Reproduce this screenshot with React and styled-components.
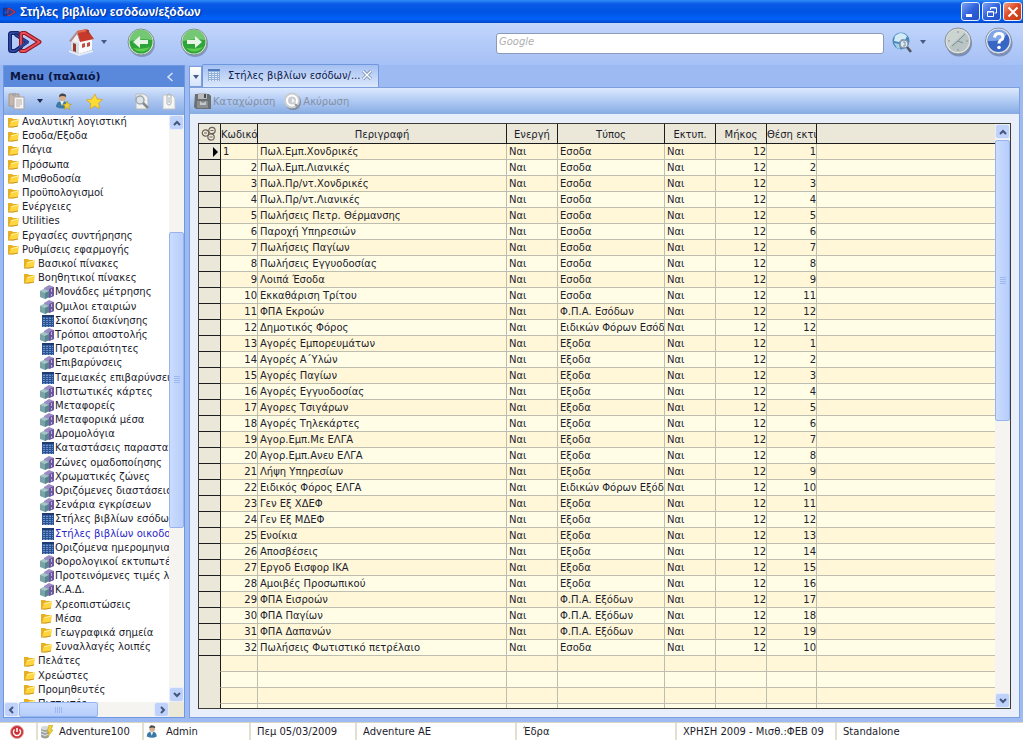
import React, { useState } from "react";
import styled, { createGlobalStyle } from "styled-components";

const GlobalStyle = createGlobalStyle`
  * {
    box-sizing: border-box;
  }
  body {
    margin: 0;
    overflow: hidden;
    font-family: "DejaVu Sans", Verdana, sans-serif;
    font-size: 10px;
    color: #1c1c2c;
  }
  button,
  input {
    font-family: inherit;
    font-size: inherit;
  }
`;

const Window = styled.div`
  height: 100vh;
  display: flex;
  flex-direction: column;
  background: #9dbaf3;
`;

const TitleBar = styled.header`
  height: 23px;
  flex: none;
  display: flex;
  align-items: center;
  gap: 4px;
  padding: 0 1px 0 3px;
  background: linear-gradient(#2f8bf8 0, #0a5ae6 4px, #0054e3 12px, #0162fb 19px, #0146c4 23px);
`;

const Title = styled.h1`
  flex: 1;
  margin: 0;
  font-family: "Liberation Sans", Arial, sans-serif;
  font-size: 12px;
  font-weight: 700;
  line-height: 16px;
  color: #fff;
  text-shadow: 1px 1px 1px #0a2f8c;
`;

const WindowButtons = styled.div`
  display: flex;
  gap: 2px;
`;

const WindowButton = styled.button`
  width: 19px;
  height: 19px;
  padding: 0;
  display: flex;
  align-items: center;
  justify-content: center;
  border: 1px solid #e8eefc;
  border-radius: 3px;
  background: ${(props) =>
    props.$close
      ? "linear-gradient(135deg, #f0a186, #de4a26 45%, #c03a14)"
      : "linear-gradient(135deg, #7da2f4, #2f62dc 50%, #2450c4)"};
`;

const TopBar = styled.div`
  height: 42px;
  flex: none;
  display: flex;
  align-items: center;
  padding: 0 10px 4px 8px;
  background: linear-gradient(#c2d6fc, #a5c0f5);
`;

const TopButton = styled.button`
  display: flex;
  align-items: center;
  gap: 5px;
  padding: 0;
  border: none;
  background: none;
  margin-right: ${(props) => props.$after || 0}px;
`;

const SearchBox = styled.input`
  width: 388px;
  height: 21px;
  margin: 2px 8px 0 auto;
  padding: 0 2px 4px;
  border: 1px solid #8a9ab8;
  border-radius: 3px;
  background: #fff;
  &::placeholder {
    color: #b0b0b0;
    font-style: italic;
    opacity: 1;
  }
`;

const Main = styled.div`
  flex: 1;
  min-height: 0;
  display: flex;
  gap: 4px;
  padding: 0 3px 4px;
  background: #9dbaf3;
`;

const Sidebar = styled.aside`
  width: 182px;
  flex: none;
  display: flex;
  flex-direction: column;
  border: 1px solid #6d98e2;
  background: #fff;
`;

const SidebarHead = styled.div`
  height: 21px;
  flex: none;
  display: flex;
  align-items: center;
  justify-content: space-between;
  padding: 0 10px 0 6px;
  background: #5a88da;
`;

const SidebarTitle = styled.h2`
  margin: 0;
  font-size: 11px;
  line-height: 16px;
  color: #0b1640;
`;

const CollapseButton = styled.button`
  padding: 0;
  border: none;
  background: none;
  display: flex;
`;

const SidebarTools = styled.div`
  height: 28px;
  flex: none;
  display: flex;
  align-items: center;
  padding: 0 6px 0 4px;
  background: linear-gradient(#d5e5fc, #a9c4f0 50%, #86abe6);
`;

const TreeArea = styled.div`
  flex: 1;
  min-height: 0;
  display: flex;
`;

const TreeClip = styled.nav`
  flex: 1;
  min-width: 0;
  overflow: hidden;
`;

// rows share the height, the last one is cut by the scroll area
const TreeList = styled.ul`
  height: calc(100% + 9px);
  margin: 0;
  padding: 0;
  list-style: none;
  display: grid;
  grid-auto-rows: 1fr;
`;

const TreeItem = styled.li`
  min-height: 0;
  padding-left: ${(props) => 3 + props.$level * 17}px;
  display: flex;
`;

const TreeLink = styled.a`
  display: flex;
  align-items: center;
  gap: 1px;
  line-height: 14px;
  white-space: nowrap;
  text-decoration: none;
  color: ${(props) => (props.$active ? "#2a1fc8" : "#1c1c2c")};
`;

const IconSlot = styled.span`
  width: 14px;
  flex: none;
  display: flex;
  justify-content: flex-end;
  margin-left: ${(props) => (props.$deep ? -1 : 0)}px;
`;

const Scroll = styled.div`
  flex: none;
  display: flex;
  flex-direction: ${(props) => (props.$horizontal ? "row" : "column")};
  ${(props) => (props.$horizontal ? "height: 15px;" : "width: 15px;")}
  background: #f5f4f0;
`;

const ScrollButton = styled.button`
  width: 15px;
  height: 15px;
  flex: none;
  padding: 0;
  display: flex;
  align-items: center;
  justify-content: center;
  border: 1px solid #e6eefc;
  border-radius: 3px;
  background: #c0d2fa;
`;

const ScrollGap = styled.div`
  flex: ${(props) => props.$share};
`;

const ScrollThumb = styled.div`
  flex: ${(props) => props.$share};
  display: flex;
  align-items: center;
  justify-content: center;
  border: 1px solid #98b4ee;
  border-radius: 2px;
  background: ${(props) =>
    props.$horizontal
      ? "linear-gradient(#cbdcfe, #b6cdfb)"
      : "linear-gradient(90deg, #cbdcfe, #b6cdfb)"};
`;

const Corner = styled.div`
  width: 15px;
  background: #ece9d8;
`;

const BottomScroll = styled.div`
  display: flex;
  > :first-child {
    flex: 1;
  }
`;

const Content = styled.main`
  flex: 1;
  min-width: 0;
  display: flex;
  flex-direction: column;
`;

const TabStrip = styled.div`
  height: 22px;
  flex: none;
  display: flex;
  align-items: flex-end;
`;

const TabMenu = styled.button`
  width: 13px;
  height: 21px;
  padding: 0;
  display: flex;
  align-items: center;
  justify-content: center;
  border: 1px solid #7d9cd8;
  background: linear-gradient(#fff, #d4e2fa);
`;

const Tab = styled.div`
  height: 23px;
  display: flex;
  align-items: center;
  gap: 2px;
  padding: 0 6px 2px 5px;
  border: 1px solid #6f97de;
  border-bottom: none;
  border-radius: 2px 2px 0 0;
  background: linear-gradient(#a4c0f2, #dce8fc);
`;

const TabLabel = styled.button`
  display: flex;
  align-items: center;
  gap: 8px;
  padding: 0;
  border: none;
  background: none;
  white-space: nowrap;
  color: #10204c;
`;

const TabClose = styled.button`
  display: flex;
  padding: 0;
  border: none;
  background: none;
`;

const Panel = styled.section`
  flex: 1;
  min-height: 0;
  display: flex;
  flex-direction: column;
  border: 1px solid #7d9fdd;
  background: #e8eefa;
`;

const PanelTools = styled.div`
  height: 26px;
  flex: none;
  display: flex;
  align-items: center;
  gap: 9px;
  padding: 0 4px;
  background: linear-gradient(#dce9fd, #b0caf3 50%, #86abe3);
`;

const PanelButton = styled.button`
  display: flex;
  align-items: center;
  gap: 2px;
  padding: 0;
  border: none;
  background: none;
  color: #8490a4;
`;

const GridFrame = styled.div`
  flex: 1;
  min-height: 0;
  margin: 9px 8px 8px;
  display: flex;
  border: 1px solid #3c3c34;
  background: #fff;
`;

const GridClip = styled.div`
  flex: 1;
  min-width: 0;
  overflow: hidden;
`;

const Table = styled.table`
  width: 100%;
  table-layout: fixed;
  border-collapse: separate;
  border-spacing: 0;
`;

const Col = styled.col`
  width: ${(props) => (props.$width ? `${props.$width}px` : "auto")};
`;

const HeadCell = styled.th`
  height: 20px;
  padding: ${(props) => (props.$icon ? "0 2px" : "3px 0 0")};
  overflow: hidden;
  white-space: nowrap;
  font-weight: 400;
  line-height: 16px;
  text-align: ${(props) => (props.$left ? "left" : "center")};
  border-right: 1px solid #1c1c1c;
  border-bottom: 1px solid #1c1c1c;
  background: #ebe8d9;
  &:last-child {
    border-right: none;
  }
  svg {
    display: block;
  }
`;

const Row = styled.tr`
  background: #fff7d8;
  &:nth-child(even) {
    background: #fffde6;
  }
`;

const Cell = styled.td`
  height: 16px;
  padding: 0 ${(props) => (props.$right ? 0 : 2)}px;
  overflow: hidden;
  white-space: nowrap;
  line-height: 15px;
  text-align: ${(props) => (props.$right ? "right" : "left")};
  border-right: 1px solid #bdbdb0;
  border-bottom: 1px solid #bdbdb0;
  &:last-child {
    border-right: none;
  }
`;

const RowMark = styled.td`
  height: 16px;
  padding: 0;
  line-height: 0;
  text-align: right;
  border-right: 1px solid #1c1c1c;
  border-bottom: 1px solid ${(props) => (props.$empty ? "#ebe8d9" : "#1c1c1c")};
  background: #ebe8d9;
`;

const StatusBar = styled.footer`
  height: 18px;
  flex: none;
  display: grid;
  grid-template-columns: 38fr 106fr 107fr 106fr 160fr 160fr 160fr 186fr;
  border-top: 1px solid #d8d4c4;
  background: #fff;
`;

const StatusItem = styled.div`
  min-width: 0;
  display: flex;
  align-items: center;
  gap: 6px;
  padding-left: ${(props) => (props.$icon ? 2 : 6)}px;
  white-space: nowrap;
  border-right: 2px solid #e2dfd0;
  &:first-child {
    padding-left: 10px;
  }
  &:last-child {
    border-right: none;
  }
`;

const Logo = ({ width, height }) => (
  <svg width={width} height={height} viewBox="0 0 34 24" fill="none" strokeLinejoin="round" strokeLinecap="round">
    <path d="M10 3H3.500Q2 3 2 4.500v15Q2 21 3.500 21H7l6-4" stroke="#14246a" strokeWidth="4" />
    <path d="M10 3H3.500Q2 3 2 4.500v15Q2 21 3.500 21H7l6-4" stroke="#3350a8" strokeWidth="1.500" />
    <path d="M8 5l11 7-7 5" stroke="#14246a" strokeWidth="3.500" />
    <path d="M8 5l11 7-7 5" stroke="#3350a8" strokeWidth="1.200" />
    <path d="M13 16V4.500Q13 3 14.500 3H17l14.500 9L17 21h-4" stroke="#931824" strokeWidth="4" />
    <path d="M13 16V4.500Q13 3 14.500 3H17l14.500 9L17 21h-4" stroke="#e8505a" strokeWidth="1.800" />
    <path d="M16 10l4 2-8 5" stroke="#2a429c" strokeWidth="2.500" />
  </svg>
);

const HouseIcon = () => (
  <svg width="28" height="28" viewBox="0 0 28 28">
    <path d="M2 22l10 5 14-5-10-4z" fill="#63769c" opacity=".5" />
    <path d="M3 12l8 2v12l-8-4z" fill="#d9dde4" />
    <path d="M11 13l13-2v11l-13 4z" fill="#f8f9fb" />
    <path d="M3 13l6-9 2 9v2z" fill="#eef0f4" />
    <path d="M9 3l10-2 7 10-14 3z" fill="#c7392a" />
    <path d="M9 3l10-2 1 2-10 2z" fill="#e26a50" />
    <path d="M9 3L1 13l2 1 6-8 3 8z" fill="#b08a86" />
    <path d="M18 2h3v4h-2z" fill="#a83a2c" />
    <path d="M5 15l3 1v8l-3-1z" fill="#9b3b28" />
    <path d="M14 16l3-1v4l-3 1zM19 15l3-1v4l-3 1z" fill="#bc4c3c" />
    <path d="M1 22l10 4 14-4v2l-14 4-10-4z" fill="#e9edf4" />
  </svg>
);

const Arrow = ({ flip }) => (
  <svg width="29" height="29" viewBox="0 0 29 29">
    <circle cx="15" cy="16" r="13" fill="#5c7196" opacity=".55" />
    <circle cx="14" cy="14" r="13" fill="#e4eae4" stroke="#7f8f8f" strokeWidth="1" />
    <circle cx="14" cy="14" r="11.500" fill="#2fa43a" />
    <path d="M3 13a11 11 0 0 1 22-1q-10-2-22 1z" fill="#74c874" />
    <path d="M6 20a11 11 0 0 0 17-1q-8 3-17 1z" fill="#5ed04e" />
    <path
      d={flip ? "M22 14l-7-6v4H7v4h8v4z" : "M6 14l7-6v4h8v4h-8v4z"}
      fill="#e6f5e4"
    />
  </svg>
);

const Caret = ({ color = "#465a84" }) => (
  <svg width="6" height="4" viewBox="0 0 6 4">
    <path d="M0 0h6L3 4z" fill={color} />
  </svg>
);

const GlobeIcon = () => (
  <svg width="20" height="21" viewBox="0 0 20 21">
    <circle cx="9" cy="9" r="8.500" fill="#4b88bd" />
    <path d="M3 4q6-6 12 0l-2 4-3-1-3 3-5-1z" fill="#d3ebf5" />
    <path d="M2 11l5 1 1 5-3-1z" fill="#a5d3e4" />
    <circle cx="12" cy="12" r="4" fill="#dcebf3" stroke="#8796aa" strokeWidth="1.500" />
    <path d="M15 15l4 5" stroke="#54565c" strokeWidth="2.500" />
    <path d="M11 10h2v4h-2" stroke="#7b8ea8" fill="none" />
  </svg>
);

const ClockIcon = () => (
  <svg width="29" height="30" viewBox="0 0 29 30">
    <circle cx="15" cy="16.500" r="13" fill="#566a90" opacity=".6" />
    <circle cx="14" cy="14" r="13" fill="#dfe2e2" stroke="#858d92" />
    <circle cx="14" cy="14" r="11" fill="#b9c4c4" />
    <path d="M5 20A11 11 0 0 1 21 5z" fill="#ccd4d2" />
    <path d="M14 14l7-7M14 14l5 2M14 14l-6 5" stroke="#7b8f94" strokeWidth="1" />
    <path d="M14 4v2M14 22v2M4 14h2M22 14h2" stroke="#8a9496" />
  </svg>
);

const HelpIcon = () => (
  <svg width="28" height="30" viewBox="0 0 28 30">
    <circle cx="14.500" cy="16.500" r="13" fill="#566a90" opacity=".6" />
    <circle cx="13.500" cy="14" r="13" fill="#dfe4ec" stroke="#8390a8" />
    <circle cx="13.500" cy="14" r="11" fill="#3866c4" />
    <path d="M3 14A10.500 10.500 0 0 1 22 7q-5 8-19 7z" fill="#7fa6e8" />
    <path d="M9.500 10.500q.500-4 4.500-4t4 3.500q0 2-2 3t-2 3.500" fill="none" stroke="#fff" strokeWidth="3" />
    <circle cx="14" cy="20.500" r="1.800" fill="#fff" />
  </svg>
);

const Chevron = ({ dir, color = "#40587e" }) => {
  const paths = {
    up: "M1 6l3-3 3 3",
    down: "M1 2l3 3 3-3",
    left: "M5 1L2 4l3 3",
    right: "M3 1l3 3-3 3",
  };
  return (
    <svg width="8" height="8" viewBox="0 0 8 8">
      <path d={paths[dir]} fill="none" stroke={color} strokeWidth="2" />
    </svg>
  );
};

const Grip = ({ horizontal }) => (
  <svg width="8" height="8" viewBox="0 0 8 8">
    <path
      d={horizontal ? "M.5 1v6M2.500 1v6M4.500 1v6M6.500 1v6" : "M1 .5h6M1 2.500h6M1 4.500h6M1 6.500h6"}
      stroke="#9db8f0"
    />
  </svg>
);

const PasteIcon = () => (
  <svg width="18" height="18" viewBox="0 0 18 18">
    <path d="M1 2h10v12H1z" fill="#c8b4a8" stroke="#a09890" />
    <path d="M4 1h4v3H4z" fill="#a4a6aa" />
    <path d="M6 5h10v12H6z" fill="#f4f4f4" stroke="#a8a4a2" />
    <path d="M8 8h6M8 10h6M8 12h6M8 14h4" stroke="#c0b0aa" />
  </svg>
);

const UserIcon = ({ star, size = 17 }) => (
  <svg width={size} height={size} viewBox="0 0 17 17">
    <path d="M1 14q0-6 6-6t6 6q-5 3-12 0z" fill="#3a7aa4" />
    <path d="M5 8l2 5 2-5z" fill="#e3eef5" />
    <circle cx="7.500" cy="4.500" r="3.500" fill="#d8b08e" />
    <path d="M4 4q0-4 4-3.500T11 4Q8 2 4 4z" fill="#474747" />
    {star && <path d="M12 8l1.300 3 3.200.3-2.500 2 .8 3.200-2.800-1.700-2.800 1.700.8-3.200-2.500-2 3.200-.3z" fill="#f2cf33" stroke="#ad8c1c" strokeWidth=".5" />}
  </svg>
);

const StarIcon = () => (
  <svg width="17" height="17" viewBox="0 0 17 17">
    <path d="M9 1l2 5 5.500.5-4 3.500 1 5.500L8.500 13 4 16l1-5.500L.5 7 6 6z" fill="#ffdc32" stroke="#d0a82c" strokeWidth=".8" />
  </svg>
);

const FindIcon = () => (
  <svg width="16" height="17" viewBox="0 0 16 17">
    <path d="M2 1h8l4 3v12H2z" fill="#f0f1f1" stroke="#b5b8ba" />
    <circle cx="6" cy="7" r="4" fill="#dce4e8" stroke="#a0a8ac" strokeWidth="1.500" />
    <path d="M9 10l5 5" stroke="#84898c" strokeWidth="2.500" />
  </svg>
);

const ClipIcon = () => (
  <svg width="14" height="17" viewBox="0 0 14 17">
    <path d="M1 2h9l3 3v11H1z" fill="#f5f6f6" stroke="#c0c3c5" />
    <path d="M5 10V3q0-2 2-2t2 2v7q0 2-2 2t-2-2M7 4v6" fill="none" stroke="#b0b3b5" />
  </svg>
);

const FolderIcon = () => (
  <svg width="13" height="11" viewBox="0 0 13 11">
    <path d="M0 10V1h4l1 1h4v2z" fill="#e8ae24" />
    <path d="M1 10l2-6 8-2-1 7-5 1.500z" fill="#ffd640" />
    <path d="M3 4.800L10.500 3" stroke="#fff09a" />
    <path d="M0 10h5l5-1" stroke="#c8921c" fill="none" />
  </svg>
);

const CubeIcon = () => (
  <svg width="14" height="14" viewBox="0 0 14 14">
    <path d="M4 3l5-3 5 2v9l-5 2-5-3z" fill="#9c8cc4" />
    <path d="M9 4l5-2v9l-5 2z" fill="#6c589e" />
    <path d="M0 6l4-2 5 2v6l-4 2-5-2z" fill="#78a4a8" />
    <path d="M0 6l4-2 5 2-4 2z" fill="#a5c4c8" />
    <path d="M5 8l4-2v6l-4 2z" fill="#5a8490" />
    <path d="M11.500 4v3M11.500 9v2" stroke="#c0b0e4" />
  </svg>
);

const GridIcon = ({ size = 12, pale }) => (
  <svg width={size} height={size} viewBox="0 0 12 12">
    <path d="M0 0h12v12H0z" fill={pale ? "#e1eaf6" : "#6a92cc"} />
    <path d="M0 0h12v2.500H0z" fill={pale ? "#4d7bbd" : "#1e3c74"} />
    <path
      d="M0 4.500h12M0 6.500h12M0 8.500h12M0 10.500h12M.5 2v10M3.500 2v10M6.500 2v10M9.500 2v10M11.500 2v10"
      stroke={pale ? "#91b0d8" : "#2c5292"}
    />
  </svg>
);

const SaveIcon = () => (
  <svg width="17" height="18" viewBox="0 0 17 18">
    <path d="M1 2h14l2 2v13H2L0 15z" fill="#6c6f72" />
    <path d="M4 1h9v6H4z" fill="#b8bbbe" />
    <path d="M10 2h2v4h-2z" fill="#494c50" />
    <path d="M3 9h11v7H3z" fill="#8b8e91" />
    <path d="M6 9q3 4 6 0v4H6z" fill="#c5c8ca" />
  </svg>
);

const CancelIcon = () => (
  <svg width="17" height="18" viewBox="0 0 17 18">
    <circle cx="9" cy="10" r="8" fill="#7c8797" />
    <circle cx="8" cy="8.500" r="8" fill="#c9ccd0" />
    <circle cx="8" cy="8.500" r="5" fill="none" stroke="#fff" strokeWidth="2" />
    <path d="M8 6l3 3-3 2z" fill="#f4f4f4" />
    <path d="M11 12l4 4" stroke="#92979d" strokeWidth="2" />
  </svg>
);

const RingsIcon = () => (
  <svg width="16" height="16" viewBox="0 0 16 16" fill="none" stroke="#6c6258" strokeWidth="1.200">
    <circle cx="4.500" cy="7" r="3.200" />
    <circle cx="11" cy="4.500" r="3.200" />
    <circle cx="10" cy="11" r="3.200" />
    <path d="M3 7h3M9.500 4.500h3M8.500 11h3" />
  </svg>
);

const PowerIcon = () => (
  <svg width="14" height="14" viewBox="0 0 14 14">
    <circle cx="7" cy="7" r="6.500" fill="#cc3336" stroke="#e6a2a2" />
    <path d="M4.500 4.500a3.500 3.500 0 1 0 5 0M7 3v4" fill="none" stroke="#fff" strokeWidth="1.500" />
  </svg>
);

const DatabaseIcon = () => (
  <svg width="13" height="14" viewBox="0 0 13 14">
    <path d="M1 3q4-3 8 0v9q-4 3-8 0z" fill="#9ca2a2" />
    <ellipse cx="5" cy="3" rx="4" ry="2" fill="#d6dada" />
    <path d="M1 6q4 3 8 0M1 9q4 3 8 0" stroke="#e6e9e9" fill="none" />
    <path d="M9 0h4l-2 5h2l-6 8 2-6H7z" fill="#f0d038" stroke="#b09a26" strokeWidth=".5" />
  </svg>
);

const TREE = [
  [0, "folder", "Αναλυτική λογιστική"],
  [0, "folder", "Εσοδα/Εξοδα"],
  [0, "folder", "Πάγια"],
  [0, "folder", "Πρόσωπα"],
  [0, "folder", "Μισθοδοσία"],
  [0, "folder", "Προϋπολογισμοί"],
  [0, "folder", "Ενέργειες"],
  [0, "folder", "Utilities"],
  [0, "folder", "Εργασίες συντήρησης"],
  [0, "folder", "Ρυθμίσεις εφαρμογής"],
  [1, "folder", "Βασικοί πίνακες"],
  [1, "folder", "Βοηθητικοί πίνακες"],
  [2, "cube", "Μονάδες μέτρησης"],
  [2, "cube", "Ομιλοι εταιριών"],
  [2, "grid", "Σκοποί διακίνησης"],
  [2, "cube", "Τρόποι αποστολής"],
  [2, "grid", "Προτεραιότητες"],
  [2, "cube", "Επιβαρύνσεις"],
  [2, "grid", "Ταμειακές επιβαρύνσεις"],
  [2, "cube", "Πιστωτικές κάρτες"],
  [2, "cube", "Μεταφορείς"],
  [2, "cube", "Μεταφορικά μέσα"],
  [2, "cube", "Δρομολόγια"],
  [2, "grid", "Καταστάσεις παραστατικών"],
  [2, "cube", "Ζώνες ομαδοποίησης"],
  [2, "cube", "Χρωματικές ζώνες"],
  [2, "cube", "Οριζόμενες διαστάσεις"],
  [2, "cube", "Σενάρια εγκρίσεων"],
  [2, "grid", "Στήλες βιβλίων εσόδων/εξόδων"],
  [2, "grid", "Στήλες βιβλίων οικοδομών"],
  [2, "grid", "Οριζόμενα ημερομηνιακά"],
  [2, "cube", "Φορολογικοί εκτυπωτές"],
  [2, "cube", "Προτεινόμενες τιμές λογ."],
  [2, "cube", "Κ.Α.Δ."],
  [2, "folder", "Χρεοπιστώσεις"],
  [2, "folder", "Μέσα"],
  [2, "folder", "Γεωγραφικά σημεία"],
  [2, "folder", "Συναλλαγές λοιπές"],
  [1, "folder", "Πελάτες"],
  [1, "folder", "Χρεώστες"],
  [1, "folder", "Προμηθευτές"],
  [1, "folder", "Πιστωτές"],
];

const COLUMNS = [
  { name: "Κωδικός", width: 37, left: true },
  { name: "Περιγραφή", width: 249 },
  { name: "Ενεργή", width: 51 },
  { name: "Τύπος", width: 107 },
  { name: "Εκτυπ.", width: 51 },
  { name: "Μήκος", width: 51 },
  { name: "Θέση εκτύπωσης", width: 50, left: true },
  { name: "" },
];

const ROWS = [
  ["Πωλ.Εμπ.Χονδρικές", "Εσοδα", 1],
  ["Πωλ.Εμπ.Λιανικές", "Εσοδα", 2],
  ["Πωλ.Πρ/ντ.Χονδρικές", "Εσοδα", 3],
  ["Πωλ.Πρ/ντ.Λιανικές", "Εσοδα", 4],
  ["Πωλήσεις Πετρ. Θέρμανσης", "Εσοδα", 5],
  ["Παροχή Υπηρεσιών", "Εσοδα", 6],
  ["Πωλήσεις Παγίων", "Εσοδα", 7],
  ["Πωλήσεις Εγγυοδοσίας", "Εσοδα", 8],
  ["Λοιπά Έσοδα", "Εσοδα", 9],
  ["Εκκαθάριση Τρίτου", "Εσοδα", 11],
  ["ΦΠΑ Εκροών", "Φ.Π.Α. Εσόδων", 12],
  ["Δημοτικός Φόρος", "Ειδικών Φόρων Εσόδων", 12],
  ["Αγορές Εμπορευμάτων", "Εξοδα", 1],
  ["Αγορές Α΄Υλών", "Εξοδα", 2],
  ["Αγορές Παγίων", "Εξοδα", 3],
  ["Αγορές Εγγυοδοσίας", "Εξοδα", 4],
  ["Αγορες Τσιγάρων", "Εξοδα", 5],
  ["Αγορές Τηλεκάρτες", "Εξοδα", 6],
  ["Αγορ.Εμπ.Με ΕΛΓΑ", "Εξοδα", 7],
  ["Αγορ.Εμπ.Ανευ ΕΛΓΑ", "Εξοδα", 8],
  ["Λήψη Υπηρεσίων", "Εξοδα", 9],
  ["Ειδικός Φόρος ΕΛΓΑ", "Ειδικών Φόρων Εξόδων", 10],
  ["Γεν Εξ ΧΔΕΦ", "Εξοδα", 11],
  ["Γεν Εξ ΜΔΕΦ", "Εξοδα", 12],
  ["Ενοίκια", "Εξοδα", 13],
  ["Αποσβέσεις", "Εξοδα", 14],
  ["Εργοδ Εισφορ ΙΚΑ", "Εξοδα", 15],
  ["Αμοιβές Προσωπικού", "Εξοδα", 16],
  ["ΦΠΑ Εισροών", "Φ.Π.Α. Εξόδων", 17],
  ["ΦΠΑ Παγίων", "Φ.Π.Α. Εξόδων", 18],
  ["ΦΠΑ Δαπανών", "Φ.Π.Α. Εξόδων", 19],
  ["Πωλήσεις Φωτιστικό πετρέλαιο", "Εσοδα", 10],
];

const ICONS = { folder: FolderIcon, cube: CubeIcon, grid: GridIcon };

const VerticalScroll = ({ before, thumb, after }) => (
  <Scroll>
    <ScrollButton aria-label="Πάνω">
      <Chevron dir="up" />
    </ScrollButton>
    <ScrollGap $share={before} />
    <ScrollThumb $share={thumb}>
      <Grip />
    </ScrollThumb>
    <ScrollGap $share={after} />
    <ScrollButton aria-label="Κάτω">
      <Chevron dir="down" />
    </ScrollButton>
  </Scroll>
);

const Menu = () => {
  const [active, setActive] = useState(29);
  return (
    <Sidebar>
      <SidebarHead>
        <SidebarTitle>Menu (παλαιό)</SidebarTitle>
        <CollapseButton aria-label="Σύμπτυξη">
          <svg width="8" height="10" viewBox="0 0 8 10">
            <path d="M6.500 1L2 5l4.500 4" fill="none" stroke="#d8e4fa" strokeWidth="1.500" />
          </svg>
        </CollapseButton>
      </SidebarHead>
      <SidebarTools>
        <TopButton aria-label="Επικόλληση" $after={10}>
          <PasteIcon />
          <svg width="14" height="4" viewBox="0 0 14 4">
            <path d="M6 0h6L9 4z" fill="#1c2c50" />
          </svg>
        </TopButton>
        <TopButton aria-label="Χρήστης" $after={14}>
          <UserIcon star />
        </TopButton>
        <TopButton aria-label="Αγαπημένα" $after={31}>
          <StarIcon />
        </TopButton>
        <TopButton aria-label="Εύρεση" $after={12}>
          <FindIcon />
        </TopButton>
        <TopButton aria-label="Συνημμένα">
          <ClipIcon />
        </TopButton>
      </SidebarTools>
      <TreeArea>
        <TreeClip>
          <TreeList>
            {TREE.map(([level, icon, label], i) => {
              const Icon = ICONS[icon];
              return (
                <TreeItem key={label} $level={level}>
                  <TreeLink href="#" $active={i === active} onClick={() => setActive(i)}>
                    <IconSlot $deep={level > 0}>
                      <Icon />
                    </IconSlot>
                    {label}
                  </TreeLink>
                </TreeItem>
              );
            })}
          </TreeList>
        </TreeClip>
        <VerticalScroll before={103} thumb={295} after={160} />
      </TreeArea>
      <BottomScroll>
        <Scroll $horizontal>
          <ScrollButton aria-label="Αριστερά">
            <Chevron dir="left" />
          </ScrollButton>
          <ScrollThumb $horizontal $share={79}>
            <Grip horizontal />
          </ScrollThumb>
          <ScrollGap $share={57} />
          <ScrollButton aria-label="Δεξιά">
            <Chevron dir="right" />
          </ScrollButton>
        </Scroll>
        <Corner />
      </BottomScroll>
    </Sidebar>
  );
};

const ColumnsTable = () => (
  <GridFrame>
    <GridClip>
      <Table>
        <colgroup>
          <Col $width={22} />
          {COLUMNS.map((column) => (
            <Col key={column.name} $width={column.width} />
          ))}
        </colgroup>
        <thead>
          <tr>
            <HeadCell $icon>
              <RingsIcon />
            </HeadCell>
            {COLUMNS.map((column) => (
              <HeadCell key={column.name} $left={column.left}>
                {column.name}
              </HeadCell>
            ))}
          </tr>
        </thead>
        <tbody>
          {ROWS.map(([name, type, position], i) => (
            <Row key={name}>
              <RowMark>
                {i === 0 && (
                  <svg width="7" height="10" viewBox="0 0 7 10">
                    <path d="M0 0l5 5-5 5z" fill="#000" />
                  </svg>
                )}
              </RowMark>
              <Cell $right={i > 0}>{i + 1}</Cell>
              <Cell>{name}</Cell>
              <Cell>Ναι</Cell>
              <Cell>{type}</Cell>
              <Cell>Ναι</Cell>
              <Cell $right>12</Cell>
              <Cell $right>{position}</Cell>
              <Cell />
            </Row>
          ))}
          {[1, 2, 3, 4].map((n) => (
            <Row key={n}>
              <RowMark $empty />
              {COLUMNS.map((column) => (
                <Cell key={column.name} />
              ))}
            </Row>
          ))}
        </tbody>
      </Table>
    </GridClip>
    <VerticalScroll before={1} thumb={281} after={273} />
  </GridFrame>
);

const App = () => {
  const [query, setQuery] = useState("");
  return (
    <Window>
      <GlobalStyle />
      <TitleBar>
        <Logo width={13} height={10} />
        <Title>Στήλες βιβλίων εσόδων/εξόδων</Title>
        <WindowButtons>
          <WindowButton aria-label="Ελαχιστοποίηση">
            <svg width="12" height="12" viewBox="0 0 12 12">
              <path d="M1 8h6v3H1z" fill="#fff" />
            </svg>
          </WindowButton>
          <WindowButton aria-label="Επαναφορά">
            <svg width="12" height="12" viewBox="0 0 12 12" fill="none" stroke="#fff">
              <path d="M4.500 4V2h6v5h-2M4.500 1.500h6M1.500 5.500h6v5h-6zM1.500 6h6" />
            </svg>
          </WindowButton>
          <WindowButton $close aria-label="Κλείσιμο">
            <svg width="12" height="12" viewBox="0 0 12 12">
              <path d="M1.500 1.500l9 9M10.500 1.500l-9 9" stroke="#fff" strokeWidth="2" />
            </svg>
          </WindowButton>
        </WindowButtons>
      </TitleBar>
      <TopBar>
        <TopButton aria-label="Αρχή" $after={26}>
          <Logo width={34} height={24} />
        </TopButton>
        <TopButton aria-label="Σπίτι" $after={20}>
          <HouseIcon />
          <Caret />
        </TopButton>
        <TopButton aria-label="Πίσω" $after={24}>
          <Arrow />
        </TopButton>
        <TopButton aria-label="Εμπρός">
          <Arrow flip />
        </TopButton>
        <SearchBox
          aria-label="Google"
          placeholder="Google"
          value={query}
          onChange={(e) => setQuery(e.target.value)}
        />
        <TopButton aria-label="Αναζήτηση" $after={18}>
          <GlobeIcon />
          <svg width="9" height="4" viewBox="0 0 9 4">
            <path d="M3 0h6L6 4z" fill="#465a84" />
          </svg>
        </TopButton>
        <TopButton aria-label="Ρολόι" $after={12}>
          <ClockIcon />
        </TopButton>
        <TopButton aria-label="Βοήθεια">
          <HelpIcon />
        </TopButton>
      </TopBar>
      <Main>
        <Menu />
        <Content>
          <TabStrip>
            <TabMenu aria-label="Καρτέλες">
              <Caret />
            </TabMenu>
            <Tab>
              <TabLabel>
                <GridIcon pale />
                Στήλες βιβλίων εσόδων/...
              </TabLabel>
              <TabClose aria-label="Κλείσιμο καρτέλας">
                <svg width="10" height="10" viewBox="0 0 10 10">
                  <path d="M1 1l8 8M9 1L1 9" stroke="#6d84ac" strokeWidth="3" />
                  <path d="M1 1l8 8M9 1L1 9" stroke="#fff" strokeWidth="1.500" />
                </svg>
              </TabClose>
            </Tab>
          </TabStrip>
          <Panel>
            <PanelTools>
              <PanelButton>
                <SaveIcon />
                Καταχώριση
              </PanelButton>
              <PanelButton>
                <CancelIcon />
                Ακύρωση
              </PanelButton>
            </PanelTools>
            <ColumnsTable />
          </Panel>
        </Content>
      </Main>
      <StatusBar>
        <StatusItem>
          <PowerIcon />
        </StatusItem>
        <StatusItem $icon>
          <DatabaseIcon />
          Adventure100
        </StatusItem>
        <StatusItem $icon>
          <UserIcon size={14} />
          Admin
        </StatusItem>
        <StatusItem>Πεμ 05/03/2009</StatusItem>
        <StatusItem>Adventure AE</StatusItem>
        <StatusItem>Έδρα</StatusItem>
        <StatusItem>ΧΡΗΣΗ 2009 - Μισθ.:ΦΕΒ 09</StatusItem>
        <StatusItem>Standalone</StatusItem>
      </StatusBar>
    </Window>
  );
};

export default App;
